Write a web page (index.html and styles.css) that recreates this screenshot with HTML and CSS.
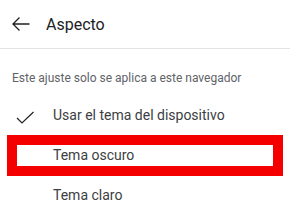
FILE: index.html
```html
<!DOCTYPE html>
<html lang="es">
  <head>
    <link rel="stylesheet" href="styles.css">
  </head>
  <body>
    <div class="top-bar">
      <svg class="back-icon" width="18" height="14" viewBox="0 0 18 14">
        <path d="M17.5 7H1M7.5 0.5L1 7l6.5 6.5" fill="none" stroke="#202124" stroke-width="1.3"/>
      </svg>
      <span class="top-title">Aspecto</span>
    </div>

    <p class="note">Este ajuste solo se aplica a este navegador</p>

    <div class="theme-list">
      <div class="theme-item">
        <svg class="check-icon" width="24" height="24" viewBox="0 0 24 24">
          <path d="M4 15l5 5L20.5 9" fill="none" stroke="#202124" stroke-width="1.2"/>
        </svg>
        <span>Usar el tema del dispositivo</span>
      </div>
      <div class="theme-item marked">
        <span>Tema oscuro</span>
      </div>
      <div class="theme-item">
        <span>Tema claro</span>
      </div>
    </div>
  </body>
</html>
```

FILE: styles.css
```css
body {
  margin: 0;
  padding: 0;
  background: #fff;
  font-family: Roboto, "Liberation Sans", sans-serif;
  color: #202124;
}

div.top-bar {
  height: 48px;
  display: flex;
  align-items: center;
  padding-left: 12px;
  border-bottom: 1px solid #e3e3e3;
}

.back-icon {
  display: block;
  margin-right: 16px;
}

.top-title {
  font-size: 16px;
}

p.note {
  margin: 0;
  padding: 21px 12px 0;
  font-size: 12px;
  line-height: 16px;
  color: #606368;
}

div.theme-list {
  margin-top: 9px;
}

div.theme-item {
  position: relative;
  height: 40px;
  display: flex;
  align-items: center;
  padding-left: 53px;
  font-size: 14px;
  color: #3c4043;
}

.check-icon {
  position: absolute;
  left: 13px;
  top: 8px;
}

/* red highlight drawn over the row */
div.marked::after {
  content: "";
  position: absolute;
  left: 7px;
  right: 7px;
  top: 0;
  bottom: -1px;
  border: 10px solid #f50000;
}
```
